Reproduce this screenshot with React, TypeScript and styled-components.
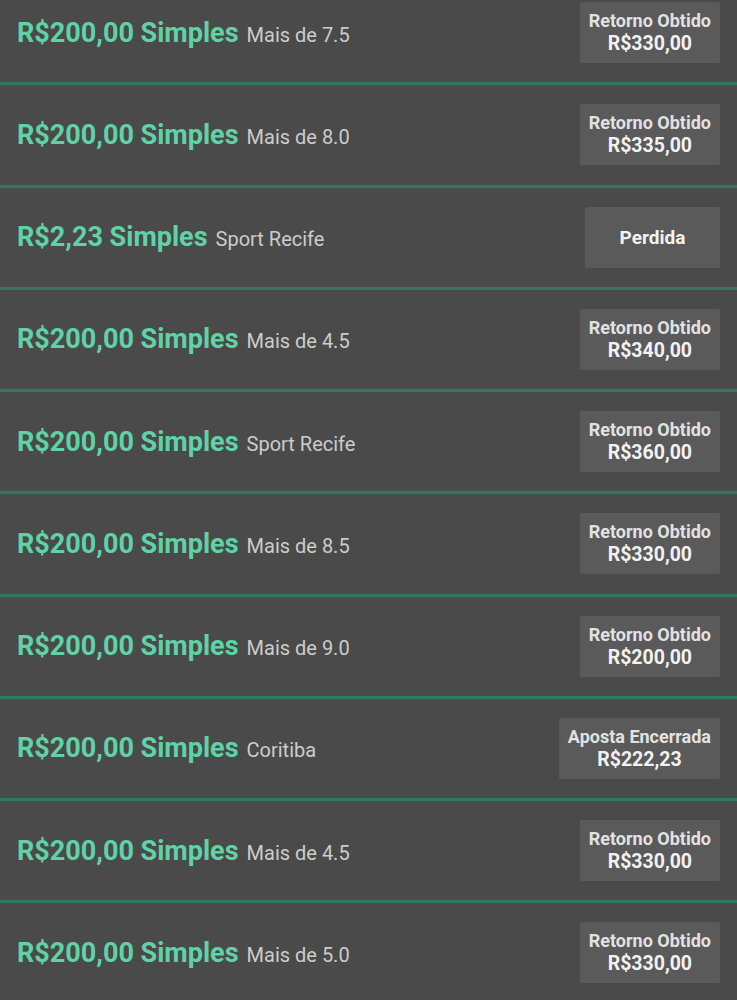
import React from "react";
import styled, { createGlobalStyle } from "styled-components";

const GlobalStyle = createGlobalStyle`
  html, body {
    margin: 0;
    padding: 0;
    background: #4a4a4a;
    font-family: Roboto, "Liberation Sans", sans-serif;
  }
`;

type Bet = {
  stake: string;
  pick: string;
  label: string;
  amount?: string;
};

const bets: Bet[] = [
  { stake: "R$200,00", pick: "Mais de 7.5", label: "Retorno Obtido", amount: "R$330,00" },
  { stake: "R$200,00", pick: "Mais de 8.0", label: "Retorno Obtido", amount: "R$335,00" },
  { stake: "R$2,23", pick: "Sport Recife", label: "Perdida" },
  { stake: "R$200,00", pick: "Mais de 4.5", label: "Retorno Obtido", amount: "R$340,00" },
  { stake: "R$200,00", pick: "Sport Recife", label: "Retorno Obtido", amount: "R$360,00" },
  { stake: "R$200,00", pick: "Mais de 8.5", label: "Retorno Obtido", amount: "R$330,00" },
  { stake: "R$200,00", pick: "Mais de 9.0", label: "Retorno Obtido", amount: "R$200,00" },
  { stake: "R$200,00", pick: "Coritiba", label: "Aposta Encerrada", amount: "R$222,23" },
  { stake: "R$200,00", pick: "Mais de 4.5", label: "Retorno Obtido", amount: "R$330,00" },
  { stake: "R$200,00", pick: "Mais de 5.0", label: "Retorno Obtido", amount: "R$330,00" },
];

// list is scrolled a bit, first row is cut at the top
const List = styled.div`
  margin-top: -17px;
  background: #4a4a4a;
`;

const Row = styled.div`
  display: flex;
  align-items: center;
  justify-content: space-between;
  height: 99.25px;
  padding: 0 17px;
  border-bottom: 3px solid #2e7a5b;
`;

const Summary = styled.div`
  display: flex;
  align-items: baseline;
  gap: 8px;
  white-space: nowrap;
`;

const Stake = styled.span`
  color: #5fd3a6;
  font-size: 27px;
  font-weight: 700;
`;

const Pick = styled.span`
  color: #cccccc;
  font-size: 20px;
  font-weight: 400;
`;

const Badge = styled.div`
  display: flex;
  flex-direction: column;
  align-items: center;
  justify-content: center;
  min-width: 135px;
  height: 61px;
  padding: 0 9px;
  box-sizing: border-box;
  background: #5a5a5a;
  border-radius: 2px;
  font-weight: 700;
`;

const BadgeLabel = styled.div<{ $single?: boolean }>`
  font-size: ${(p) => (p.$single ? "19px" : "18px")};
  line-height: 23px;
  color: ${(p) => (p.$single ? "#f2f2f2" : "#e2e2e2")};
`;

const BadgeAmount = styled.div`
  font-size: 19.5px;
  line-height: 24px;
  color: #f2f2f2;
`;

function BetRow({ bet }: { bet: Bet }) {
  return (
    <Row>
      <Summary>
        <Stake>{bet.stake} Simples</Stake>
        <Pick>{bet.pick}</Pick>
      </Summary>
      <Badge>
        <BadgeLabel $single={!bet.amount}>{bet.label}</BadgeLabel>
        {bet.amount && <BadgeAmount>{bet.amount}</BadgeAmount>}
      </Badge>
    </Row>
  );
}

export default function App() {
  return (
    <>
      <GlobalStyle />
      <List>
        {bets.map((bet, i) => (
          <BetRow key={i} bet={bet} />
        ))}
      </List>
    </>
  );
}
